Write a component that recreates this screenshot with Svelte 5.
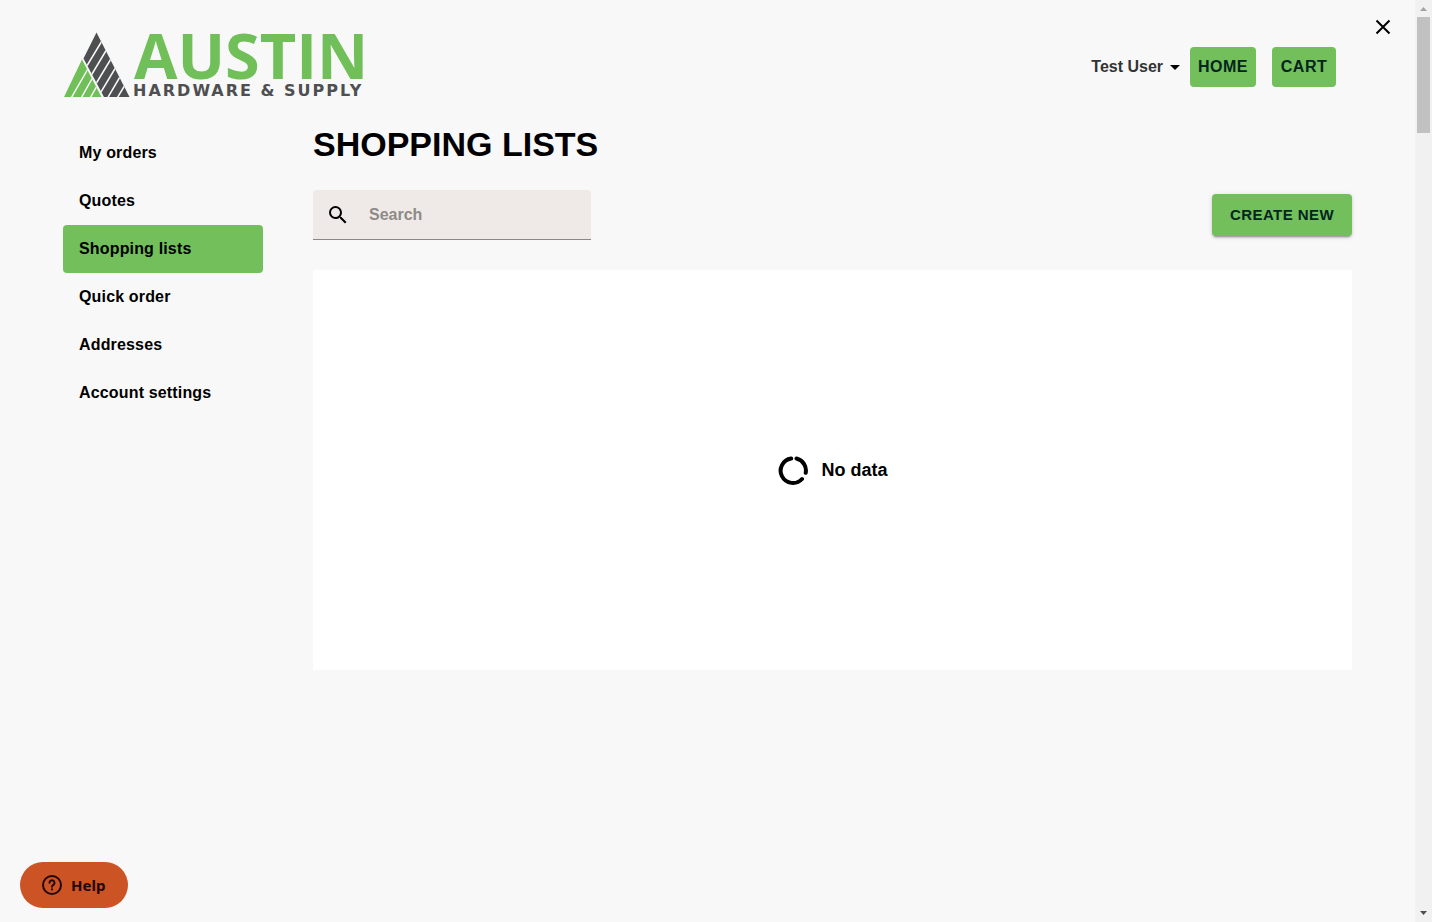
<script lang="ts">
    interface NavItem {
        label: string;
        href: string;
    }

    const navItems: NavItem[] = [
        { label: 'My orders', href: '#orders' },
        { label: 'Quotes', href: '#quotes' },
        { label: 'Shopping lists', href: '#shopping-lists' },
        { label: 'Quick order', href: '#quick-order' },
        { label: 'Addresses', href: '#addresses' },
        { label: 'Account settings', href: '#settings' }
    ];

    let active = $state('#shopping-lists');
    let search = $state('');
</script>

<div class="page">
    <div class="content">
        <header class="header">
            <a class="logo" href="#home" aria-label="Austin Hardware & Supply">
                <svg width="308" height="72" viewBox="0 0 308 72">
                    <clipPath id="dark">
                        <path d="M33.500 1.500L66.500 66H41L20.500 27.500Z" />
                    </clipPath>
                    <clipPath id="green">
                        <path d="M19 28.500L38.500 66H1Z" />
                    </clipPath>
                    <path class="dark" d="M33.500 1.500L66.500 66H41L20.500 27.500Z" />
                    <path class="green" d="M19 28.500L38.500 66H1Z" />
                    <g class="stripes" clip-path="url(#dark)">
                        <path d="M39.500 9L22 38M44 18L26 48M48.500 27L31 56M53 36L35 66M57.500 45L44 68M62 54L53 69" />
                    </g>
                    <g class="stripes" clip-path="url(#green)">
                        <path d="M26 36L7 69M30 46L17 69M34.500 54L26 69" />
                    </g>
                    <text class="name" x="71" y="48">AUSTIN</text>
                    <text class="tagline" x="70" y="65">HARDWARE &amp; SUPPLY</text>
                </svg>
            </a>
            <nav class="user-nav">
                <button class="user-menu">
                    Test User
                    <svg width="10" height="5" viewBox="0 0 10 5"><path d="M0 0h10L5 5z" /></svg>
                </button>
                <button class="button">HOME</button>
                <button class="button">CART</button>
            </nav>
        </header>

        <div class="body">
            <nav class="sidebar">
                {#each navItems as item}
                    <a
                        href={item.href}
                        class="nav-item"
                        class:active={active === item.href}
                        onclick={() => (active = item.href)}
                    >{item.label}</a>
                {/each}
            </nav>

            <main class="main">
                <h1 class="title">SHOPPING LISTS</h1>
                <div class="toolbar">
                    <label class="search">
                        <svg width="24" height="24" viewBox="0 0 24 24">
                            <path d="M15.500 14h-.79l-.28-.27A6.470 6.470 0 0 0 16 9.500 6.500 6.500 0 1 0 9.500 16c1.610 0 3.090-.59 4.230-1.570l.27.28v.79l5 4.990L20.490 19l-4.990-5zm-6 0C7.010 14 5 11.990 5 9.500S7.010 5 9.500 5 14 7.010 14 9.500 11.990 14 9.500 14z" />
                        </svg>
                        <input type="text" placeholder="Search" aria-label="Search" bind:value={search} />
                    </label>
                    <button class="button create">CREATE NEW</button>
                </div>
                <section class="empty">
                    <svg width="32" height="32" viewBox="0 0 32 32">
                        <path d="M14.200 4.500A12.300 12.300 0 1 0 25 25M19.500 4.500A12.300 12.300 0 0 1 28.700 18.800" />
                    </svg>
                    <span>No data</span>
                </section>
            </main>
        </div>
    </div>

    <div class="scrollbar" aria-hidden="true">
        <svg width="7" height="4" viewBox="0 0 7 4"><path fill="#a3a3a3" d="M0 4h7L3.500 0z" /></svg>
        <div class="thumb"></div>
        <svg width="7" height="4" viewBox="0 0 7 4"><path fill="#505050" d="M0 0h7L3.500 4z" /></svg>
    </div>

    <button class="close" aria-label="Close">
        <svg width="24" height="24" viewBox="0 0 24 24"><path d="M5.500 5.500l13 13M18.500 5.500l-13 13" /></svg>
    </button>

    <button class="help">
        <svg width="22" height="22" viewBox="0 0 22 22">
            <circle cx="11" cy="11" r="9" />
            <path d="M8.500 8.800a2.500 2.500 0 1 1 3.800 2.100c-.9.600-1.300 1-1.300 1.900" />
            <path d="M11 15.200v.300" />
        </svg>
        Help
    </button>
</div>

<style>
    :global(body) {
        background: #f8f8f8;
    }

    .page {
        position: relative;
        display: flex;
        min-height: 100vh;
        font-family: 'Liberation Sans', Arial, sans-serif;
        font-size: 16px;
        font-weight: 700;
        color: #000;
    }

    .page * {
        box-sizing: border-box;
    }

    button {
        border: none;
        background: none;
        font: inherit;
        color: inherit;
        cursor: pointer;
    }

    .content {
        flex: 1;
        padding: 0 63px;
    }

    .header {
        display: flex;
        justify-content: space-between;
        align-items: center;
        padding: 31px 16px 22px 0;
    }

    .logo svg {
        display: block;
    }

    .dark,
    .tagline {
        fill: #4d4f51;
    }

    .green,
    .name {
        fill: #70bf58;
    }

    .stripes {
        fill: none;
        stroke: #f8f8f8;
        stroke-width: 1.5;
    }

    .name {
        font-family: 'Open Sans', sans-serif;
        font-size: 63px;
        font-weight: 700;
    }

    .tagline {
        font-family: 'DejaVu Sans', sans-serif;
        font-size: 16px;
        letter-spacing: 2px;
    }

    .user-nav {
        display: flex;
        align-items: center;
        gap: 16px;
    }

    .user-menu {
        display: flex;
        align-items: center;
        gap: 7px;
        margin-right: -6px;
        padding: 0;
        color: #333;
    }

    .user-menu svg {
        fill: #000;
    }

    .button {
        min-width: 64px;
        height: 40px;
        padding: 0 8px;
        border-radius: 4px;
        background: #72bf5b;
        color: #03251f;
        line-height: 20px;
        letter-spacing: 0.03em;
    }

    .body {
        display: flex;
        gap: 50px;
    }

    .sidebar {
        flex: 0 0 200px;
        display: flex;
        flex-direction: column;
        padding-top: 4px;
    }

    .nav-item {
        padding: 0 16px;
        border-radius: 4px;
        line-height: 48px;
        letter-spacing: 0.01em;
        color: #000;
        text-decoration: none;
    }

    .nav-item.active {
        background: #72bf5b;
    }

    .main {
        flex: 1;
    }

    .title {
        margin: 0 0 27px;
        font-size: 34px;
        line-height: 38px;
    }

    .toolbar {
        display: flex;
        justify-content: space-between;
        align-items: center;
        margin-bottom: 30px;
    }

    .search {
        display: flex;
        align-items: center;
        gap: 19px;
        width: 278px;
        height: 50px;
        padding: 0 13px;
        border-bottom: 1px solid #8a8785;
        border-radius: 4px 4px 0 0;
        background: #efeae7;
    }

    .search svg {
        flex: none;
    }

    .search input {
        flex: 1;
        min-width: 0;
        padding: 0;
        border: none;
        outline: none;
        background: none;
        font: inherit;
    }

    .search input::placeholder {
        color: #8e8a88;
        opacity: 1;
    }

    .create {
        width: 140px;
        height: 42px;
        font-size: 15px;
        box-shadow: 0 3px 1px -2px rgba(0, 0, 0, 0.2), 0 2px 2px rgba(0, 0, 0, 0.14), 0 1px 5px rgba(0, 0, 0, 0.12);
    }

    .empty {
        display: flex;
        justify-content: center;
        align-items: center;
        gap: 12px;
        height: 400px;
        background: #fff;
        font-size: 18px;
    }

    .empty svg {
        fill: none;
        stroke: #000;
        stroke-width: 4;
        stroke-linecap: round;
    }

    .scrollbar {
        flex: 0 0 17px;
        display: flex;
        flex-direction: column;
        align-items: center;
        padding: 7px 0;
        background: #f1f1f1;
    }

    .thumb {
        width: 13px;
        height: 116px;
        margin: 6px 0 auto;
        background: #c1c1c1;
    }

    .close {
        position: absolute;
        top: 15px;
        right: 37px;
        padding: 0;
    }

    .close svg {
        display: block;
        stroke: #000;
        stroke-width: 2;
    }

    .help {
        position: fixed;
        bottom: 14px;
        left: 20px;
        display: flex;
        align-items: center;
        gap: 8px;
        height: 46px;
        padding: 0 23px 0 21px;
        border-radius: 23px;
        background: #cc5323;
        color: #240505;
        font-family: 'Noto Sans', sans-serif;
        font-size: 15px;
    }

    .help svg {
        fill: none;
        stroke: #240505;
        stroke-width: 2;
        stroke-linecap: round;
    }
</style>
